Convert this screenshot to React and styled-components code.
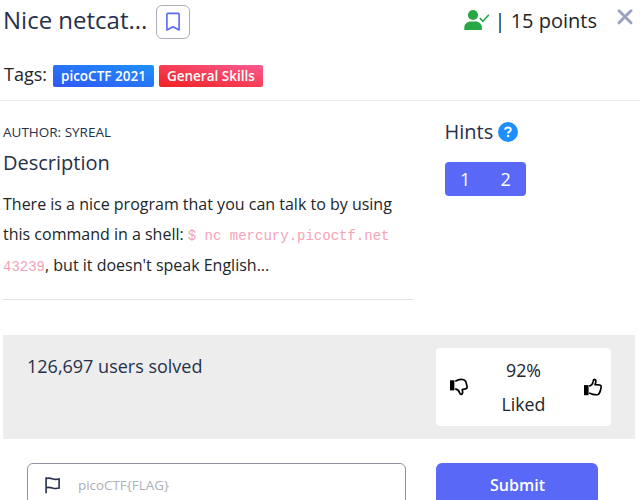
import React from "react";
import styled, { createGlobalStyle } from "styled-components";

const GlobalStyle = createGlobalStyle`
  *, *::before, *::after { box-sizing: border-box; }
  body {
    margin: 0;
    background: #fff;
    color: #212529;
    font-family: "Open Sans", "Noto Sans", sans-serif;
    font-size: 16px;
    line-height: 24px;
    overflow: hidden;
  }
`;

const Modal = styled.main`
  width: 640px;
  height: 500px;
  overflow: hidden;
`;

const Header = styled.header`
  height: 101px;
  border-bottom: 1px solid #e9ecef;
`;

const TitleRow = styled.div`
  display: flex;
  align-items: flex-start;
  padding: 5px 6px 0 3px;
`;

const Title = styled.h1`
  margin: 0;
  color: #27304b;
  font-size: 24px;
  font-weight: 400;
  line-height: 30px;
`;

const BookmarkButton = styled.button`
  display: flex;
  align-items: center;
  justify-content: center;
  width: 34px;
  height: 34px;
  margin-left: 9px;
  padding: 0;
  border: 1px solid #abafb9;
  border-radius: 6px;
  background: #fff;
  color: #5968f6;
`;

const Score = styled.div`
  display: flex;
  margin-left: auto;
  font-size: 20px;
  line-height: 31px;
  white-space: pre;

  svg { margin: 2px 5px 0 0; }
`;

const CloseButton = styled.button`
  display: flex;
  margin: 3px 0 0 19px;
  padding: 0;
  border: 0;
  background: none;
`;

const Tags = styled.div`
  display: flex;
  align-items: center;
  gap: 5px;
  margin-top: 23px;
  padding-left: 4px;
`;

const TagsLabel = styled.span`
  margin: -1px 1px 0 0;
  font-size: 18px;
`;

const Tag = styled.span`
  height: 22px;
  margin-top: 3px;
  padding: 0 8px;
  border-radius: 2px;
  background: linear-gradient(to top right, ${(p) => p.$from}, ${(p) => p.$to});
  color: #fff;
  font-size: 13.5px;
  font-weight: 600;
  line-height: 22px;
`;

const Content = styled.section`
  display: grid;
  grid-template-columns: 410px 1fr;
  column-gap: 31.5px;
  height: 234px;
  padding: 22px 0 0 3px;
`;

const Details = styled.article`
  height: 177px;
  border-bottom: 1px solid #e3e4e6;
`;

const Author = styled.div`
  margin-top: -1px;
  color: #27304b;
  font-size: 13.5px;
  line-height: 20px;
`;

const Heading = styled.h2`
  display: flex;
  align-items: center;
  gap: 5px;
  margin: ${(p) => p.$margin};
  color: #27304b;
  font-size: 20px;
  font-weight: 400;
  line-height: 24px;
`;

const Paragraph = styled.p`
  margin: 14px 0 0;
  line-height: 30.4px;
`;

const Code = styled.code`
  color: #f5a3b7;
  font-family: "Liberation Mono", monospace;
  font-size: 14px;
  line-height: 1;
`;

const HintGroup = styled.div`
  display: inline-flex;
  margin-top: 18px;
  border-radius: 4px;
  background: #5968f6;
`;

const HintButton = styled.button`
  width: 40.5px;
  height: 34px;
  padding: 0 0 0 1px;
  border: 0;
  background: none;
  color: #fff;
  font: 500 18px/34px "Open Sans", sans-serif;
`;

const Stats = styled.section`
  display: flex;
  justify-content: space-between;
  height: 104px;
  margin: 0 5px 0 3px;
  padding: 13px 24px;
  background: #ededed;
`;

const Solved = styled.div`
  padding-top: 3px;
  color: #27304b;
  font-size: 18px;
  line-height: 30px;
`;

const Rating = styled.div`
  display: flex;
  align-items: center;
  justify-content: space-between;
  width: 175px;
  height: 78px;
  padding: 0 8px 0 13px;
  border-radius: 4px;
  background: #fff;
`;

const RatingText = styled.div`
  margin-right: 5px;
  font-size: 17.8px;
  line-height: 34px;
  text-align: center;
`;

const FlagForm = styled.form`
  display: flex;
  gap: 30px;
  padding: 24px 0 0 27px;
`;

const FlagField = styled.label`
  display: flex;
  align-items: center;
  width: 379px;
  height: 46px;
  padding: 0 0 2px 17px;
  border: 1px solid #92929d;
  border-radius: 6px;
`;

const FlagInput = styled.input`
  width: 290px;
  margin: 0 0 0 16px;
  padding: 0;
  border: 0;
  outline: 0;
  color: #27304b;
  font: 13.4px/24px "Open Sans", sans-serif;

  &::placeholder { color: #adb0b9; opacity: 1; }
`;

const SubmitButton = styled.button`
  width: 162px;
  height: 46px;
  padding: 0 0 2px 1px;
  border: 0;
  border-radius: 6px;
  background: #5968f6;
  color: #fff;
  font: 600 16px/24px "Open Sans", sans-serif;
`;

function BookmarkIcon() {
  return (
    <svg width="16" height="20" viewBox="0 0 16 20" fill="none" stroke="currentColor" strokeWidth="1.6" strokeLinejoin="round">
      <path d="M1.9 2.4Q1.9 1.4 2.9 1.4h10.2q1 0 1 1v15.6L8 14.7l-6.1 3.3z" />
    </svg>
  );
}

function PersonCheckIcon() {
  return (
    <svg width="26" height="26" viewBox="0 0 26 26" fill="#28a745">
      <circle cx="9" cy="8" r="5.1" />
      <path d="M.3 23v-2.5c0-3.7 3-6.1 6.6-6.1h4.4c3.7 0 6.6 2.4 6.6 6.1V23z" />
      <path d="m16.3 11.6 2.5 2.7 5.7-6" fill="none" stroke="#28a745" strokeWidth="1.6" strokeLinecap="round" strokeLinejoin="round" />
    </svg>
  );
}

function CloseIcon() {
  return (
    <svg width="18" height="18" viewBox="0 0 18 18">
      <path d="m3 2.8 12 12m0-12-12 12" stroke="#9ca3c0" strokeWidth="3" strokeLinecap="round" />
    </svg>
  );
}

function QuestionIcon() {
  return (
    <svg width="20" height="20" viewBox="0 0 20 20">
      <circle cx="10" cy="10" r="10" fill="#1e8fff" />
      <path d="M7.2 7.7C7.3 6.3 8.4 5.6 10 5.6c1.7 0 2.8.8 2.8 2.1 0 2-2.7 1.9-2.7 3.7" fill="none" stroke="#fff" strokeWidth="2" />
      <circle cx="10.1" cy="14" r="1.3" fill="#fff" />
    </svg>
  );
}

const thumbOutline = "M6.2 8.1c2.5-.4 3.5-2.2 3.9-4.4.2-1.5.6-2.3 1.5-2.3 1.7.1 1.6 2.2.4 5.2 3.4 0 5.4-.1 6 1.1.4.8.1 2.2-.4 4.1-.5 2.2-1 4.1-2.5 4.7-1.1.4-5 .3-6.9-.7L6.2 15";

function ThumbUpIcon() {
  return (
    <svg width="20" height="18" viewBox="0 0 20 18">
      <path d="M1 7.1h4.6v10.1H1z" />
      <path d={thumbOutline} fill="none" stroke="#000" strokeWidth="1.7" strokeLinejoin="round" />
    </svg>
  );
}

function ThumbDownIcon() {
  return (
    <svg width="20" height="18" viewBox="0 0 20 18">
      <path d="M1 2.3h4.4v10.1H1z" />
      <path d="M6.2 3.4c2.4-1.6 4.7-2.2 7-1.9 1.8.2 3.1.5 3.7 2.4l1.1 4.2c.4 1.6-.1 2.5-1.6 2.8l-3.2.6c.7 2.3.8 4-.4 4.7-1 .5-1.8-.1-2.3-1.6-.7-2.2-2-3.4-4.3-3.7" fill="none" stroke="#000" strokeWidth="1.7" strokeLinejoin="round" />
    </svg>
  );
}

function FlagIcon() {
  return (
    <svg width="17" height="18" viewBox="0 0 17 18" fill="none" stroke="#27304b" strokeWidth="1.6">
      <path d="M1.1 1.2v16M1.1 2.6c2.5-.8 4.2-.5 6.2.2s3.7.9 6.8.1v9.2c-2.8.8-4.6.6-6.8-.1s-3.7-1-6.2-.2" />
    </svg>
  );
}

export default function App() {
  return (
    <>
      <GlobalStyle />
      <Modal>
        <Header>
          <TitleRow>
            <Title>Nice netcat...</Title>
            <BookmarkButton aria-label="Bookmark"><BookmarkIcon /></BookmarkButton>
            <Score><PersonCheckIcon />| 15 points</Score>
            <CloseButton aria-label="Close"><CloseIcon /></CloseButton>
          </TitleRow>
          <Tags>
            <TagsLabel>Tags:</TagsLabel>
            <Tag $from="#3157f6" $to="#1e90fa">picoCTF 2021</Tag>
            <Tag $from="#ef2020" $to="#fb5c90">General Skills</Tag>
          </Tags>
        </Header>
        <Content>
          <Details>
            <Author>AUTHOR: SYREAL</Author>
            <Heading $margin="9px 0 0">Description</Heading>
            <Paragraph>
              There is a nice program that you can talk to by using this command in a shell:{" "}
              <Code>$ nc mercury.picoctf.net 43239</Code>, but it doesn't speak English...
            </Paragraph>
          </Details>
          <aside>
            <Heading $margin="-3px 0 0">Hints <QuestionIcon /></Heading>
            <HintGroup>
              <HintButton>1</HintButton>
              <HintButton>2</HintButton>
            </HintGroup>
          </aside>
        </Content>
        <Stats>
          <Solved>126,697 users solved</Solved>
          <Rating>
            <ThumbDownIcon />
            <RatingText>92%<br />Liked</RatingText>
            <ThumbUpIcon />
          </Rating>
        </Stats>
        <FlagForm>
          <FlagField>
            <FlagIcon />
            <FlagInput placeholder="picoCTF{FLAG}" />
          </FlagField>
          <SubmitButton type="button">Submit</SubmitButton>
        </FlagForm>
      </Modal>
    </>
  );
}
